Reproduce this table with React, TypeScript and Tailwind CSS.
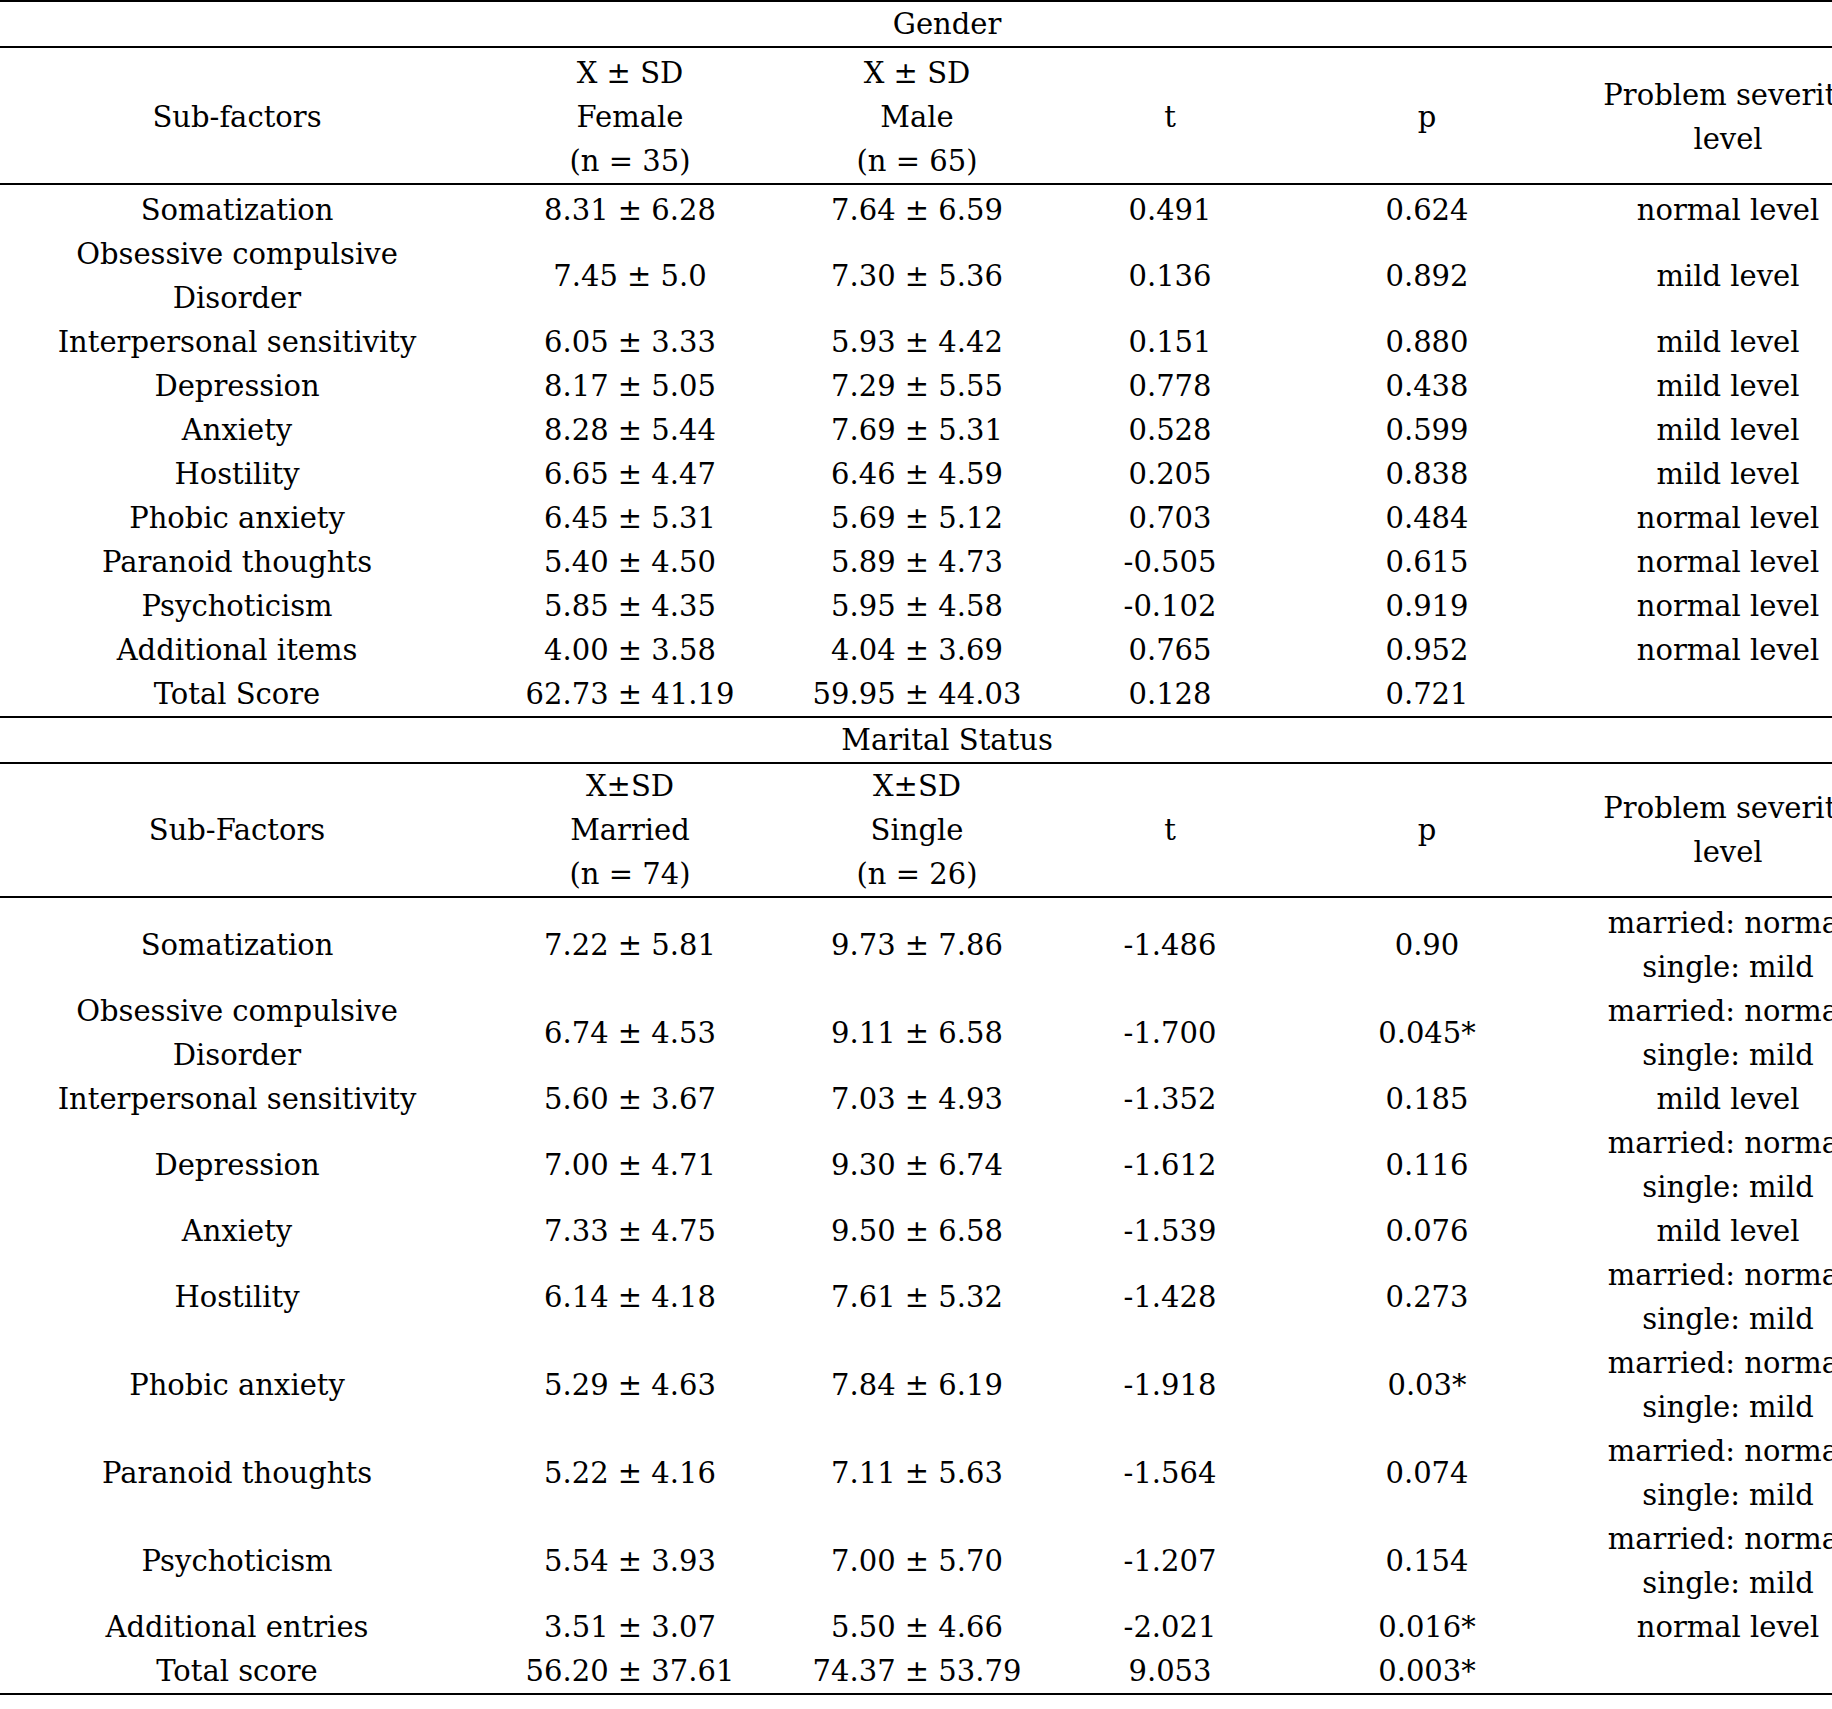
import React from "react";

type Row = {
  name: React.ReactNode;
  a: string;
  b: string;
  t: string;
  p: string;
  level: React.ReactNode;
};

const mixed = (
  <>
    married: normal
    <br />
    single: mild
  </>
);

const ocd = (
  <>
    Obsessive compulsive
    <br />
    Disorder
  </>
);

const genderRows: Row[] = [
  { name: "Somatization", a: "8.31 ± 6.28", b: "7.64 ± 6.59", t: "0.491", p: "0.624", level: "normal level" },
  { name: ocd, a: "7.45 ± 5.0", b: "7.30 ± 5.36", t: "0.136", p: "0.892", level: "mild level" },
  { name: "Interpersonal sensitivity", a: "6.05 ± 3.33", b: "5.93 ± 4.42", t: "0.151", p: "0.880", level: "mild level" },
  { name: "Depression", a: "8.17 ± 5.05", b: "7.29 ± 5.55", t: "0.778", p: "0.438", level: "mild level" },
  { name: "Anxiety", a: "8.28 ± 5.44", b: "7.69 ± 5.31", t: "0.528", p: "0.599", level: "mild level" },
  { name: "Hostility", a: "6.65 ± 4.47", b: "6.46 ± 4.59", t: "0.205", p: "0.838", level: "mild level" },
  { name: "Phobic anxiety", a: "6.45 ± 5.31", b: "5.69 ± 5.12", t: "0.703", p: "0.484", level: "normal level" },
  { name: "Paranoid thoughts", a: "5.40 ± 4.50", b: "5.89 ± 4.73", t: "-0.505", p: "0.615", level: "normal level" },
  { name: "Psychoticism", a: "5.85 ± 4.35", b: "5.95 ± 4.58", t: "-0.102", p: "0.919", level: "normal level" },
  { name: "Additional items", a: "4.00 ± 3.58", b: "4.04 ± 3.69", t: "0.765", p: "0.952", level: "normal level" },
  { name: "Total Score", a: "62.73 ± 41.19", b: "59.95 ± 44.03", t: "0.128", p: "0.721", level: "" },
];

const maritalRows: Row[] = [
  { name: "Somatization", a: "7.22 ± 5.81", b: "9.73 ± 7.86", t: "-1.486", p: "0.90", level: mixed },
  { name: ocd, a: "6.74 ± 4.53", b: "9.11 ± 6.58", t: "-1.700", p: "0.045*", level: mixed },
  { name: "Interpersonal sensitivity", a: "5.60 ± 3.67", b: "7.03 ± 4.93", t: "-1.352", p: "0.185", level: "mild level" },
  { name: "Depression", a: "7.00 ± 4.71", b: "9.30 ± 6.74", t: "-1.612", p: "0.116", level: mixed },
  { name: "Anxiety", a: "7.33 ± 4.75", b: "9.50 ± 6.58", t: "-1.539", p: "0.076", level: "mild level" },
  { name: "Hostility", a: "6.14 ± 4.18", b: "7.61 ± 5.32", t: "-1.428", p: "0.273", level: mixed },
  { name: "Phobic anxiety", a: "5.29 ± 4.63", b: "7.84 ± 6.19", t: "-1.918", p: "0.03*", level: mixed },
  { name: "Paranoid thoughts", a: "5.22 ± 4.16", b: "7.11 ± 5.63", t: "-1.564", p: "0.074", level: mixed },
  { name: "Psychoticism", a: "5.54 ± 3.93", b: "7.00 ± 5.70", t: "-1.207", p: "0.154", level: mixed },
  { name: "Additional entries", a: "3.51 ± 3.07", b: "5.50 ± 4.66", t: "-2.021", p: "0.016*", level: "normal level" },
  { name: "Total score", a: "56.20 ± 37.61", b: "74.37 ± 53.79", t: "9.053", p: "0.003*", level: "" },
];

const cell = "p-0 text-center align-middle whitespace-nowrap";

const Section: React.FC<{
  title: string;
  first: string;
  xsd: string;
  colA: string;
  nA: string;
  colB: string;
  nB: string;
  rows: Row[];
  top?: boolean;
}> = ({ title, first, xsd, colA, nA, colB, nB, rows, top }) => {
  const head = `${cell} border-b-2 border-black leading-[44px] ${top ? "pt-[3px]" : ""}`;
  return (
    <>
      <tr>
        <td
          colSpan={6}
          className={`${cell} h-[46px] border-b-2 border-black ${top ? "border-t-2" : ""}`}
        >
          {title}
        </td>
      </tr>
      <tr>
        <td className={head}>{first}</td>
        <td className={head}>
          {xsd}
          <br />
          {colA}
          <br />
          {nA}
        </td>
        <td className={head}>
          {xsd}
          <br />
          {colB}
          <br />
          {nB}
        </td>
        <td className={head}>t</td>
        <td className={head}>p</td>
        <td className={head}>
          Problem severity
          <br />
          level
        </td>
      </tr>
      {rows.map((r, i) => {
        const cls = `${cell} ${i === 0 ? "pt-[3px]" : ""} ${
          i === rows.length - 1 ? "border-b-2 border-black" : ""
        }`;
        return (
          <tr key={i}>
            <td className={cls}>{r.name}</td>
            <td className={cls}>{r.a}</td>
            <td className={cls}>{r.b}</td>
            <td className={cls}>{r.t}</td>
            <td className={cls}>{r.p}</td>
            <td className={cls}>{r.level}</td>
          </tr>
        );
      })}
    </>
  );
};

export default function App() {
  return (
    <div className="w-[1832px] min-h-[1709px] overflow-hidden bg-white text-black">
      <table className="w-[1894px] table-fixed border-collapse font-['DejaVu_Serif','Liberation_Serif',serif] text-[29px] leading-[44px]">
        <colgroup>
          <col className="w-[474px]" />
          <col className="w-[312px]" />
          <col className="w-[262px]" />
          <col className="w-[244px]" />
          <col className="w-[270px]" />
          <col className="w-[332px]" />
        </colgroup>
        <tbody>
          <Section
            top
            title="Gender"
            first="Sub-factors"
            xsd="X ± SD"
            colA="Female"
            nA="(n = 35)"
            colB="Male"
            nB="(n = 65)"
            rows={genderRows}
          />
          <Section
            title="Marital Status"
            first="Sub-Factors"
            xsd="X±SD"
            colA="Married"
            nA="(n = 74)"
            colB="Single"
            nB="(n = 26)"
            rows={maritalRows}
          />
        </tbody>
      </table>
    </div>
  );
}
